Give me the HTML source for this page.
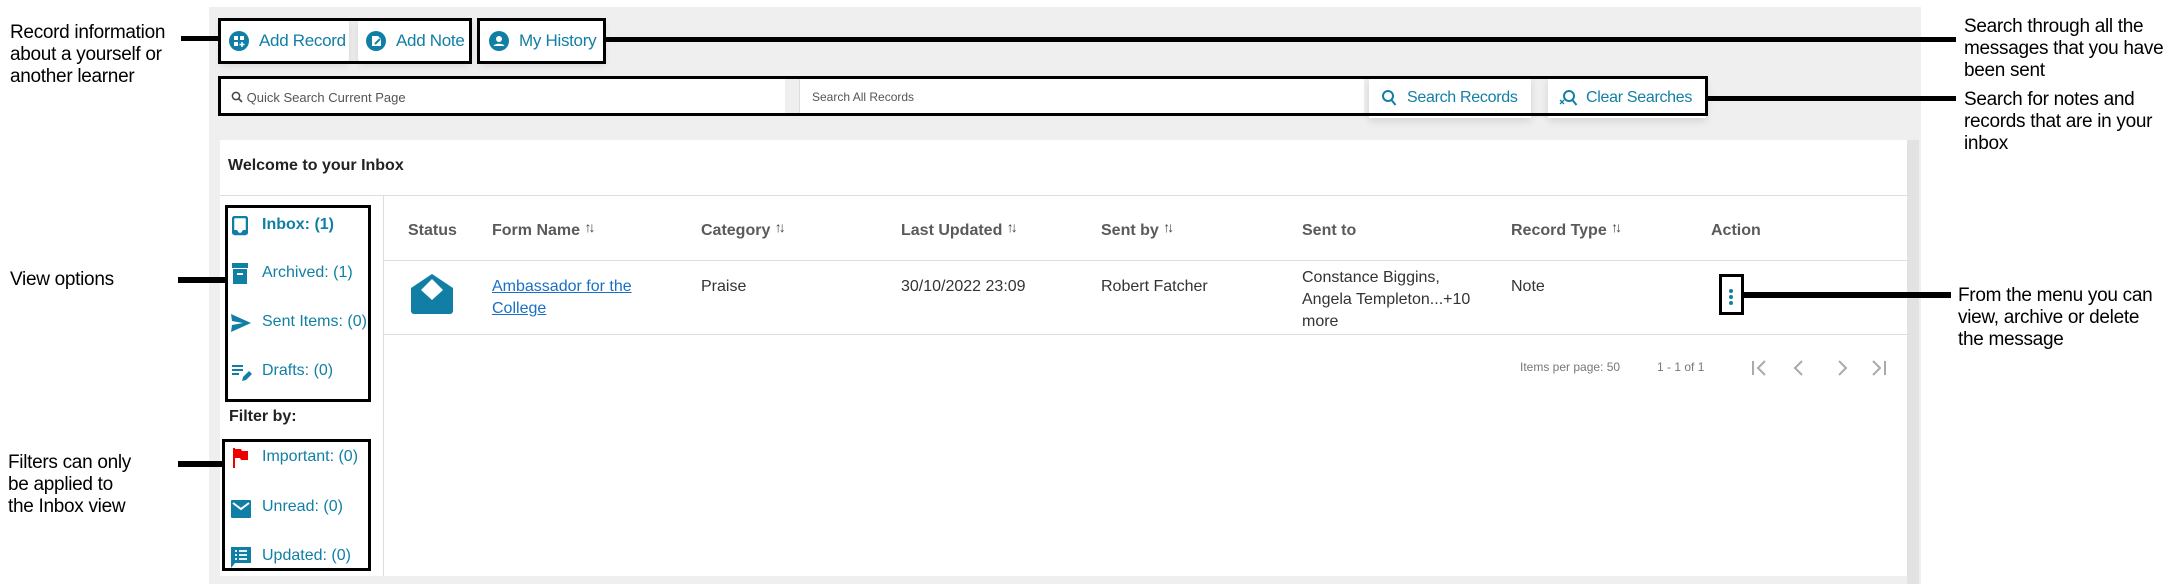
<!DOCTYPE html>
<html><head><meta charset="utf-8"><style>
*{margin:0;padding:0;box-sizing:border-box}
body{width:2180px;height:584px;background:#fff;position:relative;overflow:hidden;font-family:"Liberation Sans",Arial,sans-serif}
.a{position:absolute}
.ann{position:absolute;font-size:19px;line-height:22px;color:#000;letter-spacing:-0.3px}
.bl{position:absolute;background:#000}
.box{position:absolute;border:3px solid #000}
.btn{position:absolute;background:#fff;box-shadow:0 3px 8px rgba(0,0,0,.12);border-radius:3px;font-size:17px;color:#117fa5;display:flex;align-items:center;letter-spacing:-0.3px}
.hd{position:absolute;top:221px;font-size:16px;line-height:20px;font-weight:bold;color:#5a5a5a;white-space:nowrap}
.cell{position:absolute;font-size:16px;color:#333;line-height:22px}
.side{position:absolute;left:262px;font-size:16px;color:#117fa5}
.ar{font-size:14px;line-height:0;font-weight:bold;color:#444;position:relative;top:-3px;letter-spacing:-3px}
</style></head><body>
<div class="a" style="left:209px;top:7px;width:1712px;height:577px;background:#efefef"></div>
<div class="a" style="left:1907px;top:140px;width:12px;height:444px;background:#e2e2e2"></div>
<div class="btn" style="left:221px;top:20px;width:128px;height:42px;padding-left:8px">
<svg width="20" height="20" viewBox="0 0 20 20"><circle cx="10" cy="10" r="10" fill="#117fa5"/><rect x="5" y="5" width="4" height="4" fill="#fff"/><rect x="11" y="5" width="4" height="4" fill="#fff"/><rect x="5" y="11" width="4" height="4" fill="#fff"/><path d="M13 11v5M10.5 13.5h5" stroke="#fff" stroke-width="1.5"/></svg>
<span style="margin-left:10px">Add Record</span></div>
<div class="btn" style="left:358px;top:20px;width:112px;height:42px;padding-left:8px">
<svg width="20" height="20" viewBox="0 0 20 20"><circle cx="10" cy="10" r="10" fill="#117fa5"/><path d="M6 5h6l3 3v7H6z" fill="#fff"/><path d="M9 13l5-5" stroke="#117fa5" stroke-width="2"/></svg>
<span style="margin-left:10px">Add Note</span></div>
<div class="btn" style="left:480px;top:20px;width:124px;height:42px;padding-left:9px">
<svg width="20" height="20" viewBox="0 0 20 20"><circle cx="10" cy="10" r="10" fill="#117fa5"/><circle cx="10" cy="8" r="3" fill="#fff"/><path d="M4.5 15c1-3 10-3 11 0z" fill="#fff"/></svg>
<span style="margin-left:10px">My History</span></div>
<div class="box" style="left:218px;top:18px;width:254px;height:46px"></div>
<div class="box" style="left:477px;top:18px;width:129px;height:46px"></div>
<div class="bl" style="left:606px;top:37px;width:1350px;height:5px"></div>
<div class="a" style="left:219px;top:78px;width:566px;height:36px;background:#fff;font-size:13px;color:#555;padding:12px 0 0 12px">
<svg width="12" height="12" viewBox="0 0 12 12" style="vertical-align:-1px"><circle cx="5" cy="5" r="3.6" fill="none" stroke="#444" stroke-width="1.5"/><path d="M7.5 7.5l3.5 3.5" stroke="#444" stroke-width="1.6"/></svg>&nbsp;Quick Search Current Page</div>
<div class="a" style="left:799px;top:78px;width:565px;height:36px;background:#fff;font-size:12px;color:#555;padding:12px 0 0 12px;border-left:1px solid #ddd">Search All Records</div>
<div class="btn" style="left:1369px;top:78px;width:162px;height:40px;padding-left:12px;border-radius:0;font-size:16px">
<svg width="16" height="18" viewBox="0 0 16 18"><circle cx="7" cy="7" r="5" fill="none" stroke="#117fa5" stroke-width="2"/><path d="M10.5 11l4 5" stroke="#117fa5" stroke-width="2"/></svg><span style="margin-left:10px">Search Records</span></div>
<div class="btn" style="left:1548px;top:78px;width:158px;height:40px;padding-left:10px;border-radius:0;font-size:16px">
<svg width="20" height="18" viewBox="0 0 20 18"><circle cx="11" cy="7" r="5" fill="none" stroke="#117fa5" stroke-width="2"/><path d="M14.5 11l4 5" stroke="#117fa5" stroke-width="2"/><path d="M2 11l4 4M6 11l-4 4" stroke="#117fa5" stroke-width="1.3"/></svg><span style="margin-left:8px">Clear Searches</span></div>
<div class="box" style="left:218px;top:76px;width:1490px;height:40px"></div>
<div class="bl" style="left:1708px;top:96px;width:248px;height:5px"></div>
<div class="a" style="left:220px;top:140px;width:1687px;height:436px;background:#fff"></div>
<div class="a" style="left:228px;top:157px;font-size:16px;font-weight:bold;color:#222">Welcome to your Inbox</div>
<div class="a" style="left:220px;top:195px;width:1687px;height:1px;background:#ddd"></div>
<div class="a" style="left:383px;top:195px;width:1px;height:381px;background:#ddd"></div>
<svg class="a" style="left:232px;top:216px" width="16" height="20" viewBox="0 0 16 20"><rect x="1" y="1" width="14" height="17" rx="2" fill="none" stroke="#117fa5" stroke-width="2.5"/><path d="M1 14h4l2 3h2l2-3h4v4H1z" fill="#117fa5"/></svg>
<div class="side" style="top:216px;font-weight:bold">Inbox: (1)</div>
<svg class="a" style="left:232px;top:263px" width="16" height="22" viewBox="0 0 16 22"><rect x="0" y="0" width="16" height="5" fill="#117fa5"/><rect x="1" y="6" width="14" height="15" fill="#117fa5"/><rect x="5" y="10" width="6" height="2" fill="#fff"/></svg>
<div class="side" style="top:264px">Archived: (1)</div>
<svg class="a" style="left:231px;top:314px" width="20" height="18" viewBox="0 0 20 18"><path d="M0 0l20 9-20 9 1-7 11-2-11-2z" fill="#117fa5"/></svg>
<div class="side" style="top:313px">Sent Items: (0)</div>
<svg class="a" style="left:232px;top:364px" width="20" height="18" viewBox="0 0 20 18"><path d="M0 2h11M0 6h11M0 10h7" stroke="#117fa5" stroke-width="2"/><path d="M10 17l1-4 6-6 3 3-6 6z" fill="#117fa5"/></svg>
<div class="side" style="top:362px">Drafts: (0)</div>
<div class="box" style="left:225px;top:205px;width:146px;height:197px"></div>
<div class="a" style="left:229px;top:408px;font-size:16px;font-weight:bold;color:#222">Filter by:</div>
<svg class="a" style="left:233px;top:448px" width="16" height="20" viewBox="0 0 16 20"><path d="M0 0h2v20H0z" fill="#e00"/><path d="M2 1h6l1 2h6v9H8l-1-2H2z" fill="#e00"/></svg>
<div class="side" style="top:448px">Important: (0)</div>
<svg class="a" style="left:231px;top:500px" width="20" height="18" viewBox="0 0 20 18"><rect width="20" height="18" rx="1" fill="#117fa5"/><path d="M2 3l8 6 8-6" fill="none" stroke="#fff" stroke-width="2"/></svg>
<div class="side" style="top:498px">Unread: (0)</div>
<svg class="a" style="left:231px;top:547px" width="20" height="21" viewBox="0 0 20 21"><path d="M0 0h20v16H4l-4 5z" fill="#117fa5"/><path d="M4 4h2M8 4h8M4 8h2M8 8h8M4 12h2M8 12h8" stroke="#fff" stroke-width="1.8"/></svg>
<div class="side" style="top:547px">Updated: (0)</div>
<div class="box" style="left:222px;top:439px;width:149px;height:132px"></div>
<div class="bl" style="left:178px;top:277px;width:47px;height:6px"></div>
<div class="bl" style="left:178px;top:461px;width:45px;height:6px"></div>
<div class="a" style="left:384px;top:260px;width:1523px;height:1px;background:#ddd"></div>
<div class="a" style="left:384px;top:334px;width:1523px;height:1px;background:#ddd"></div>
<div class="hd" style="left:408px">Status</div>
<div class="hd" style="left:492px">Form Name <span class="ar">↑↓</span></div>
<div class="hd" style="left:701px">Category <span class="ar">↑↓</span></div>
<div class="hd" style="left:901px">Last Updated <span class="ar">↑↓</span></div>
<div class="hd" style="left:1101px">Sent by <span class="ar">↑↓</span></div>
<div class="hd" style="left:1302px">Sent to</div>
<div class="hd" style="left:1511px">Record Type <span class="ar">↑↓</span></div>
<div class="hd" style="left:1711px">Action</div>
<svg class="a" style="left:411px;top:274px" width="42" height="40" viewBox="0 0 42 40"><path d="M0 14L21 0l21 14v23a3 3 0 0 1-3 3H3a3 3 0 0 1-3-3z" fill="#117fa5"/><path d="M21 5l11 11-11 10-11-10z" fill="#fff"/></svg>
<div class="cell" style="left:492px;top:276px;color:#1a6fc4;text-decoration:underline">Ambassador for the<br>College</div>
<div class="cell" style="left:701px;top:276px">Praise</div>
<div class="cell" style="left:901px;top:276px">30/10/2022 23:09</div>
<div class="cell" style="left:1101px;top:276px">Robert Fatcher</div>
<div class="cell" style="left:1302px;top:267px">Constance Biggins,<br>Angela Templeton...+10<br>more</div>
<div class="cell" style="left:1511px;top:276px">Note</div>
<div class="a" style="left:1729px;top:289px;width:4px;height:4px;border-radius:2px;background:#117fa5;box-shadow:0 6px 0 #117fa5,0 12px 0 #117fa5"></div>
<div class="box" style="left:1719px;top:274px;width:25px;height:41px"></div>
<div class="bl" style="left:1744px;top:292px;width:207px;height:6px"></div>
<div class="a" style="left:1520px;top:360px;font-size:12px;color:#777">Items per page: 50</div>
<div class="a" style="left:1657px;top:360px;font-size:12px;color:#777">1 - 1 of 1</div>
<svg class="a" style="left:1750px;top:358px" width="140" height="20" viewBox="0 0 140 20"><g fill="none" stroke="#aaa" stroke-width="2"><path d="M3 3v14M15 3l-7 7 7 7"/><path d="M52 3l-7 7 7 7"/><path d="M89 3l7 7-7 7"/><path d="M123 3l7 7-7 7M135 3v14"/></g></svg>
<div class="ann" style="left:10px;top:22px">Record information<br>about a yourself or<br>another learner</div>
<div class="bl" style="left:181px;top:36px;width:38px;height:5px"></div>
<div class="ann" style="left:1964px;top:16px">Search through all the<br>messages that you have<br>been sent</div>
<div class="ann" style="left:1964px;top:89px">Search for notes and<br>records that are in your<br>inbox</div>
<div class="ann" style="left:10px;top:269px">View options</div>
<div class="ann" style="left:8px;top:452px">Filters can only<br>be applied to<br>the Inbox view</div>
<div class="ann" style="left:1958px;top:285px">From the menu you can<br>view, archive or delete<br>the message</div>
</body></html>
